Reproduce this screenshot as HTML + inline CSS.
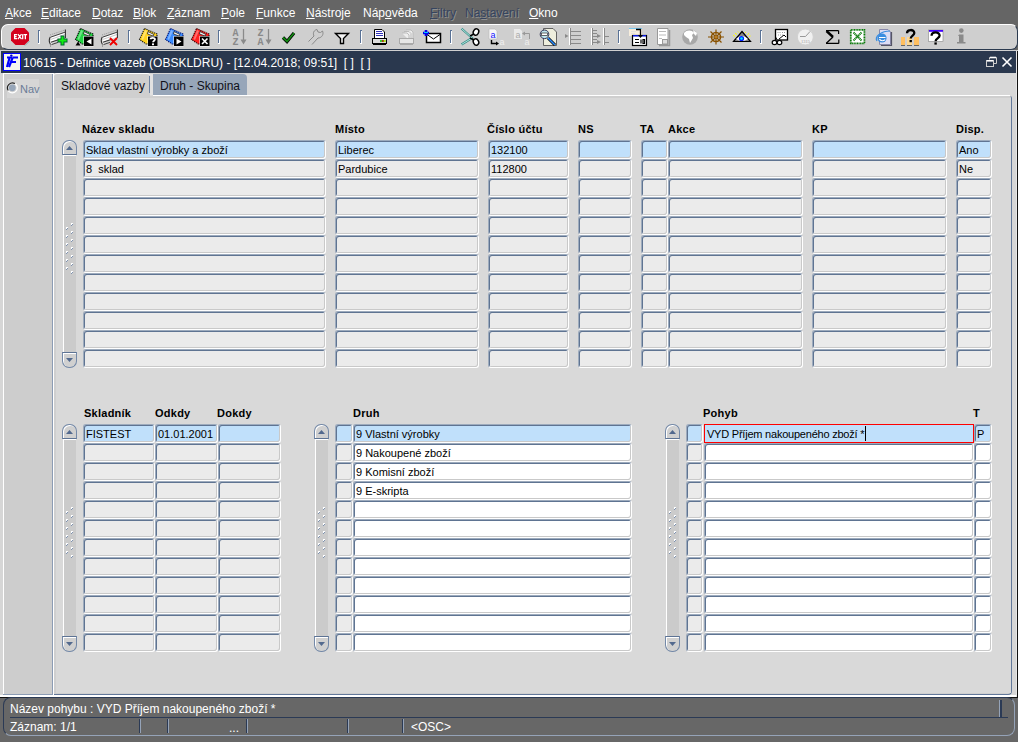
<!DOCTYPE html><html><head><meta charset="utf-8"><style>
*{box-sizing:border-box}
html,body{margin:0;padding:0}
body{width:1018px;height:742px;overflow:hidden;position:relative;background:#656565;font-family:"Liberation Sans",sans-serif;}
.a{position:absolute}
.m{position:absolute;top:6px;font-size:12px;color:#fff;white-space:pre;line-height:15px}
.md{color:#35445f;text-shadow:1px 1px 0 #8e8e8e}
.u{text-decoration:underline}
.f{position:absolute;height:19px;box-shadow:inset 1px 1px 0 #5f7492,inset -1px -1px 0 #c9c9c9;border-top:1px solid #9dabbd;border-left:1px solid #9dabbd;border-right:1px solid #fff;border-bottom:1px solid #fff;background:#ebebeb;border-radius:3px;font-size:11px;line-height:17px;padding-top:1px;padding-left:2px;white-space:pre;color:#000;overflow:hidden}
.c{background:#c0e0fb}
.w{background:#fff}
.h{position:absolute;font-size:11px;font-weight:bold;letter-spacing:0.25px;white-space:pre;line-height:13px;color:#000}
</style></head><body>
<div class="m" style="left:5px"><span class="u">A</span>kce</div>
<div class="m" style="left:41px"><span class="u">E</span>ditace</div>
<div class="m" style="left:92px"><span class="u">D</span>otaz</div>
<div class="m" style="left:133px"><span class="u">B</span>lok</div>
<div class="m" style="left:167px"><span class="u">Z</span>áznam</div>
<div class="m" style="left:221px"><span class="u">P</span>ole</div>
<div class="m" style="left:256px"><span class="u">F</span>unkce</div>
<div class="m" style="left:306px"><span class="u">N</span>ástroje</div>
<div class="m" style="left:363px">Náp<span class="u">o</span>věda</div>
<div class="m md" style="left:430px"><span class="u">F</span>iltry</div>
<div class="m md" style="left:465px">Na<span class="u">s</span>tavení</div>
<div class="m" style="left:529px"><span class="u">O</span>kno</div>
<div class="a" style="left:1px;top:24px;width:1017px;height:26px;background:#cfcfcf;border-radius:7px;border-top:1px solid #fff;border-left:1px solid #fff;border-bottom:1px solid #2b3a4f;border-right:1px solid #2b3a4f"></div>
<svg class="a" style="left:0;top:0" width="1018" height="50" shape-rendering="geometricPrecision"><polygon points="15.5,28 24.5,28 29,32.5 29,40.5 24.5,45 15.5,45 11,40.5 11,32.5" fill="#d4001c"/><path d="M25 45.5 L29.5 41" stroke="#8aa" stroke-width="1"/><path d="M14.6 34.2 V39.2 M14 34.7 H17 M14 36.7 H16.6 M14 38.7 H17 M17.9 34.2 L21.5 39.2 M21.5 34.2 L17.9 39.2 M22.7 34.2 V39.2 M23.6 34.7 H27.1 M25.35 34.2 V39.2" stroke="#fff" stroke-width="1.3" fill="none"/><path d="M38.5 30 V43" stroke="#5a7296" stroke-width="1"/><path d="M38 30.5 H40" stroke="#5a7296"/><path d="M39.5 31 V44" stroke="#fff"/><path d="M38 43.5 H40" stroke="#fff"/><path d="M128.5 30 V43" stroke="#5a7296" stroke-width="1"/><path d="M128 30.5 H130" stroke="#5a7296"/><path d="M129.5 31 V44" stroke="#fff"/><path d="M128 43.5 H130" stroke="#fff"/><path d="M218.5 30 V43" stroke="#5a7296" stroke-width="1"/><path d="M218 30.5 H220" stroke="#5a7296"/><path d="M219.5 31 V44" stroke="#fff"/><path d="M218 43.5 H220" stroke="#fff"/><path d="M360.5 30 V43" stroke="#5a7296" stroke-width="1"/><path d="M360 30.5 H362" stroke="#5a7296"/><path d="M361.5 31 V44" stroke="#fff"/><path d="M360 43.5 H362" stroke="#fff"/><path d="M450.5 30 V43" stroke="#5a7296" stroke-width="1"/><path d="M450 30.5 H452" stroke="#5a7296"/><path d="M451.5 31 V44" stroke="#fff"/><path d="M450 43.5 H452" stroke="#fff"/><path d="M618.5 30 V43" stroke="#5a7296" stroke-width="1"/><path d="M618 30.5 H620" stroke="#5a7296"/><path d="M619.5 31 V44" stroke="#fff"/><path d="M618 43.5 H620" stroke="#fff"/><path d="M760.5 30 V43" stroke="#5a7296" stroke-width="1"/><path d="M760 30.5 H762" stroke="#5a7296"/><path d="M761.5 31 V44" stroke="#fff"/><path d="M760 43.5 H762" stroke="#fff"/><g transform="translate(49,29)" fill="none"><path d="M1 6 L16 1" stroke="#999" stroke-width="1" stroke-dasharray="1 1"/><path d="M1.5 8.5 L16 3.5 V8 L1.5 13 Z" fill="#fff" stroke="none"/><path d="M1.5 13 L9 10.5 L1.5 15.5 Z" fill="#eee" stroke="none"/><path d="M1.5 8.2 L16 3.2" stroke="#444" stroke-width="1"/><path d="M1.5 10.5 L16 5.5" stroke="#bbb" stroke-width="0.8"/><path d="M2 13.2 L10 10.4" stroke="#333" stroke-width="1.1"/><path d="M2.5 15.6 L9 13.4" stroke="#444" stroke-width="1"/><path d="M16.4 0.5 V9" stroke="#333" stroke-width="1.1"/><path d="M1.2 8 C0.2 10 0.2 13.5 1.5 15.5" stroke="#333" stroke-width="1.1"/><path d="M1 17 h0.8" stroke="#555" stroke-width="1"/></g><path d="M57.5 40.5 H67.5 M62.5 35.5 V45.5" stroke="#063" stroke-width="4"/><path d="M58.5 40.5 H66.5 M62.5 36.5 V44.5" stroke="#1e1" stroke-width="2"/><g transform="translate(75,28)"><path d="M5.5 0.5 L18 6 L18 8.5 L8 16.5 L0.5 11.5 Z" fill="#22d444" stroke="#000" stroke-width="1.1" stroke-dasharray="1.2 0.9"/><path d="M2.5 11 L6 2 L8 3 L4 12 Z" fill="#fff" opacity=".35"/><path d="M9 3.5 L15 6.5 L14 8 L8.5 6 Z" fill="#f4f4f4" stroke="#222" stroke-width="0.8"/><rect x="8.5" y="8" width="10" height="10.5" fill="#fff"/><rect x="9" y="8.5" width="9.5" height="9.5" fill="#000"/><path d="M16.5 10.5 L11.5 13.5 L16.5 16.5 Z" fill="#fff"/></g><path d="M75.5 45.5 L78 41.5 L80.5 45.5 Z" fill="#000"/><g transform="translate(101,29)" fill="none"><path d="M1 6 L16 1" stroke="#999" stroke-width="1" stroke-dasharray="1 1"/><path d="M1.5 8.5 L16 3.5 V8 L1.5 13 Z" fill="#fff" stroke="none"/><path d="M1.5 13 L9 10.5 L1.5 15.5 Z" fill="#eee" stroke="none"/><path d="M1.5 8.2 L16 3.2" stroke="#444" stroke-width="1"/><path d="M1.5 10.5 L16 5.5" stroke="#bbb" stroke-width="0.8"/><path d="M2 13.2 L10 10.4" stroke="#333" stroke-width="1.1"/><path d="M2.5 15.6 L9 13.4" stroke="#444" stroke-width="1"/><path d="M16.4 0.5 V9" stroke="#333" stroke-width="1.1"/><path d="M1.2 8 C0.2 10 0.2 13.5 1.5 15.5" stroke="#333" stroke-width="1.1"/><path d="M1 17 h0.8" stroke="#555" stroke-width="1"/></g><path d="M110 38 L117 45 M117 38 L110 45" stroke="#e00" stroke-width="1.8"/><g transform="translate(139,28)"><path d="M5.5 0.5 L18 6 L18 8.5 L8 16.5 L0.5 11.5 Z" fill="#ffd21c" stroke="#111" stroke-width="1.1" stroke-dasharray="1.2 0.9"/><path d="M2.5 11 L6 2 L8 3 L4 12 Z" fill="#fff" opacity=".35"/><path d="M9 3.5 L15 6.5 L14 8 L8.5 6 Z" fill="#f4f4f4" stroke="#222" stroke-width="0.8"/><rect x="8.5" y="8" width="10" height="10.5" fill="#fff"/><rect x="9" y="8.5" width="9.5" height="9.5" fill="#000"/><path d="M11.5 11.2 C11.5 9.6 16 9.4 16 11.3 C16 12.6 14 12.8 14 14.3" stroke="#fff" stroke-width="1.8" fill="none"/><rect x="13" y="15.4" width="2" height="1.8" fill="#fff"/></g><g transform="translate(165,28)"><path d="M5.5 0.5 L18 6 L18 8.5 L8 16.5 L0.5 11.5 Z" fill="#3a8cff" stroke="#001070" stroke-width="1.1" stroke-dasharray="1.2 0.9"/><path d="M2.5 11 L6 2 L8 3 L4 12 Z" fill="#fff" opacity=".35"/><path d="M9 3.5 L15 6.5 L14 8 L8.5 6 Z" fill="#f4f4f4" stroke="#222" stroke-width="0.8"/><rect x="8.5" y="8" width="10" height="10.5" fill="#fff"/><rect x="9" y="8.5" width="9.5" height="9.5" fill="#000"/><path d="M11.5 10.5 L16.5 13.5 L11.5 16.5 Z" fill="#fff"/></g><g transform="translate(191,28)"><path d="M5.5 0.5 L18 6 L18 8.5 L8 16.5 L0.5 11.5 Z" fill="#ff2020" stroke="#300000" stroke-width="1.1" stroke-dasharray="1.2 0.9"/><path d="M2.5 11 L6 2 L8 3 L4 12 Z" fill="#fff" opacity=".35"/><path d="M9 3.5 L15 6.5 L14 8 L8.5 6 Z" fill="#f4f4f4" stroke="#222" stroke-width="0.8"/><rect x="8.5" y="8" width="10" height="10.5" fill="#fff"/><rect x="9" y="8.5" width="9.5" height="9.5" fill="#000"/><path d="M11 10.5 L16.5 16 M16.5 10.5 L11 16" stroke="#fff" stroke-width="1.6"/></g><text x="235.5" y="36" font-family="Liberation Mono" font-weight="bold" font-size="10" fill="#8a8a8a" text-anchor="middle">A</text><text x="235.5" y="44.5" font-family="Liberation Mono" font-weight="bold" font-size="10" fill="#8a8a8a" text-anchor="middle">Z</text><path d="M243.5 29 V42" stroke="#8a8a8a" stroke-width="1.3"/><path d="M240.5 39.5 L246.5 39.5 L243.5 44.5 Z" fill="#8a8a8a"/><text x="260.5" y="36" font-family="Liberation Mono" font-weight="bold" font-size="10" fill="#8a8a8a" text-anchor="middle">Z</text><text x="260.5" y="44.5" font-family="Liberation Mono" font-weight="bold" font-size="10" fill="#8a8a8a" text-anchor="middle">A</text><path d="M268.5 29 V42" stroke="#8a8a8a" stroke-width="1.3"/><path d="M265.5 39.5 L271.5 39.5 L268.5 44.5 Z" fill="#8a8a8a"/><path d="M283 37.5 L287 41.5 L294 33" stroke="#000" stroke-width="3.2" fill="none"/><path d="M283 37.5 L287 41.5 L294 33" stroke="#118811" stroke-width="1.8" fill="none"/><path d="M308.5 41.5 L314 36 C312.5 33 314 30 317 29.5 L318 32 L320.5 32.5 L322.5 31 C324 34 322 38 318 38 L312 44.5" stroke="#8a8a8a" stroke-width="1" fill="none"/><path d="M335.5 33.5 H348.5 L343.5 38.5 V43.5 H340.5 V38.5 Z" fill="#f4f4f4" stroke="#000" stroke-width="1.4" stroke-linejoin="miter"/><path d="M374.5 29.5 H382 L384.5 32 V38.5 H374.5 Z" fill="#fff" stroke="#000" stroke-width="1"/><path d="M376 31.5 H382 M376 33.5 H383 M376 35.5 H383" stroke="#1a1ab0" stroke-width="0.9"/><rect x="372.5" y="38.5" width="14" height="5" fill="#ddd" stroke="#000" stroke-width="1"/><rect x="373" y="43.5" width="13" height="1.5" fill="#000"/><path d="M380 41 H382 M382 41 H384 M384 41 H385.5" stroke="#0b0" stroke-width="1.5"/><path d="M382 41 H383.5" stroke="#e00" stroke-width="1.5"/><path d="M384 41 H385.5" stroke="#ee0" stroke-width="1.5"/><path d="M406 30 h5 l2 2 v8 M404 31.5 h5 l2 2 v6 M402 33 h5 l2 2 v5" stroke="#bbb" fill="#eee" stroke-width="1"/><rect x="399.5" y="38.5" width="14" height="5" fill="#e6e6e6" stroke="#aaa" stroke-width="1"/><rect x="400" y="43.5" width="13" height="1.5" fill="#aaa"/><rect x="426.5" y="33.5" width="14" height="9" fill="#fff" stroke="#000" stroke-width="1.5"/><path d="M427 34.5 L433.5 39 L440 34.5" stroke="#000" stroke-width="1" fill="none"/><path d="M423 33 H429 M426 30 V36" stroke="#00e" stroke-width="2.6"/><path d="M424 32.5 H428" stroke="#0cf" stroke-width="1"/><path d="M461.5 28.5 L472 38 L461.5 44.5" stroke="#3a8a8a" stroke-width="2.2" fill="none"/><path d="M461.5 28.5 L472 38 L461.5 44.5" stroke="#cfe" stroke-width="0.8" fill="none"/><ellipse cx="476" cy="32" rx="2.6" ry="3.2" fill="#fff" stroke="#000" stroke-width="1.4" transform="rotate(30 476 32)"/><ellipse cx="476" cy="42" rx="2.6" ry="3.2" fill="#fff" stroke="#000" stroke-width="1.4" transform="rotate(-30 476 42)"/><path d="M470 36 L474 34 M470 38 L474 40" stroke="#000" stroke-width="1.4"/><path d="M489 29 H495 L497 31 V39 H489 Z" fill="#f8f8f8" stroke="#bbb" stroke-width="0.6"/><text x="493" y="38" font-family="Liberation Sans" font-size="9" fill="#1515ff" text-anchor="middle">a</text><path d="M491.5 40 V43.5 H497" stroke="#000" stroke-width="1.4" fill="none"/><path d="M496 41.5 L499 43.5 L496 45.5 Z" fill="#000"/><text x="502" y="45" font-family="Liberation Sans" font-size="9" fill="#f0f0f0" text-anchor="middle">a</text><path d="M514 29 H520 L522 31 V39 H514 Z" fill="#eaeaea"/><text x="518" y="38" font-family="Liberation Sans" font-size="9" fill="#aaa" text-anchor="middle">a</text><path d="M529.5 39 V33.5 H524" stroke="#999" stroke-width="1" fill="none"/><path d="M525 31.5 L522 33.5 L525 35.5 Z" fill="#999"/><text x="527" y="45" font-family="Liberation Sans" font-size="9" fill="#eee" text-anchor="middle">a</text><path d="M543.5 28.5 H553 L556.5 32 V45.5 H543.5 Z" fill="#eeeedd" stroke="#444" stroke-width="0.8"/><path d="M548 38 L555 45" stroke="#000" stroke-width="3"/><path d="M548 38 L555 45" stroke="#2a8cff" stroke-width="1.6"/><circle cx="544.5" cy="34.3" r="4.3" fill="#bfe6ef" stroke="#335" stroke-width="1"/><rect x="541.5" y="33" width="6" height="2.5" fill="#fff" stroke="#444" stroke-width="0.8"/><path d="M569.5 28 V45" stroke="#fff" stroke-width="1"/><path d="M570.5 28 V45" stroke="#8a8a8a" stroke-width="1"/><path d="M571 31.5 H581 M571 35.5 H581 M571 39.5 H581 M571 43.5 H581" stroke="#8a8a8a" stroke-width="1"/><path d="M565 34 L568.5 36 L565 38 Z" fill="#8a8a8a"/><path d="M591.5 28 V45" stroke="#fff"/><path d="M592.5 28 V45" stroke="#8a8a8a"/><path d="M593 30.5 H597 M593 33.5 H597 M593 36.5 H597 M593 39.5 H597 M593 42.5 H597" stroke="#8a8a8a"/><path d="M597 34 L601 36 L597 38 Z M597 40 L601 42 L597 44 Z" fill="#8a8a8a"/><path d="M603.5 28 V45" stroke="#fff"/><path d="M604.5 28 V45" stroke="#8a8a8a"/><path d="M605 36.5 H609 M605 42.5 H609" stroke="#8a8a8a"/><rect x="629" y="28" width="13" height="1.2" fill="#7ac8f0"/><rect x="629" y="29" width="13" height="7" fill="#f8eedd"/><path d="M631 31.5 H636 M631 33.5 H635" stroke="#ddd" stroke-width="0.8"/><rect x="632.5" y="35.5" width="14" height="10" fill="#fff" stroke="#000" stroke-width="1.2"/><rect x="633" y="35" width="13" height="1.5" fill="#0a1adc"/><path d="M635 39.5 H639 M635 42.5 H639 M641 39.5 V43.5 M643 39.5 H644.5 V43.5 H643 Z" stroke="#000" stroke-width="1.2" fill="none"/><path d="M636 29.5 H640.5 V36" stroke="#000" stroke-width="1.3" fill="none"/><path d="M638 35 L640.5 38 L643 35 Z" fill="#000"/><path d="M657.5 28.5 H668 V44.5 H657.5 Z" fill="#fff" stroke="#999" stroke-width="1"/><path d="M669.5 30 V45.5 H659" stroke="#999" stroke-width="1.5" fill="none"/><path d="M659 31.5 H666 M659 35 H666 M659 38.5 H662" stroke="#aaa" stroke-width="0.8"/><rect x="662.5" y="39.5" width="5" height="4.5" fill="#ddd" stroke="#999" stroke-width="1"/><circle cx="690" cy="37" r="7.8" fill="#a8a8a8"/><path d="M684 33 C686 30 690 30 692 31 L694 33 L692 35 L693 38 L690 43 L689 39 L686 37 L684 35 Z M693 30 L697 33 L696 36 L694 34 Z" fill="#fff"/><g stroke="#8a5200" fill="none"><circle cx="716" cy="37" r="4.5" stroke-width="1.6"/><path d="M708 37 H724 M716 29.5 V44.5 M710.5 31.5 L721.5 42.5 M721.5 31.5 L710.5 42.5" stroke-width="1.2"/></g><circle cx="716" cy="37" r="1.2" fill="#c08020"/><path d="M742 31.5 L750.5 41.5 H733.5 Z" fill="#888" stroke="#000" stroke-width="1.2"/><path d="M736 39 Q742 33 748 39 Q742 43 736 39 Z" fill="#fff"/><circle cx="741.5" cy="38.5" r="2.6" fill="#0020ff"/><circle cx="741.5" cy="38.5" r="1.3" fill="#00e8ff"/><path d="M733 35 L735 36.5 M735 33 L737 34.5 M738 31.5 L739 32.5 M746 32 L745 33 M749 33.5 L747.5 34.5 M750.5 36 L749 37" stroke="#ff0" stroke-width="1"/><rect x="775.5" y="29.5" width="12" height="10.5" fill="#fff" stroke="#000" stroke-width="1.3"/><path d="M777.5 32.5 H781 M782 32.5 H785 M778 35 H784" stroke="#888" stroke-width="0.8" stroke-dasharray="1 1"/><path d="M779 39 L784 35 L786 37" stroke="#000" stroke-width="1" fill="none"/><ellipse cx="774.5" cy="42.5" rx="2.3" ry="2.2" fill="#fff" stroke="#000" stroke-width="1.2"/><ellipse cx="779.5" cy="42.5" rx="2.3" ry="2.2" fill="#fff" stroke="#000" stroke-width="1.2"/><path d="M775.5 37 L777 39.5" stroke="#000"/><circle cx="805.3" cy="37" r="8" fill="#f0f0f0" stroke="#d0d0d0" stroke-width="1"/><path d="M800 36.5 H805.5 L810 31.5" stroke="#999" stroke-width="1" fill="none"/><text x="805.5" y="42.5" font-family="Liberation Serif" font-size="4.5" fill="#999" text-anchor="middle">1315</text><path d="M826 30.6 H838.5 M838.6 30.5 V34 M826 43.4 H838.8 M838.8 43.6 V39.5" stroke="#000" stroke-width="1.2" fill="none"/><path d="M826.5 31 L833 37" stroke="#000" stroke-width="2.4"/><path d="M833 37 L826.3 43.2" stroke="#000" stroke-width="1.3"/><rect x="850.8" y="29.8" width="13.6" height="13.6" fill="#fff" stroke="#0b7a0b" stroke-width="1.8" stroke-dasharray="1.1 0.5"/><path d="M853.5 32.5 L861.5 40.5 M861.5 32.5 L853.5 40.5" stroke="#0b7a0b" stroke-width="2" stroke-dasharray="1.2 0.5"/><path d="M879.5 29.5 H888 L890.5 32 V44.5 H879.5 Z" fill="#dcdcf4" stroke="#8888aa" stroke-width="1"/><path d="M881 45.5 H891.5 V32" stroke="#556" stroke-width="1.2" fill="none"/><circle cx="882" cy="38" r="4.6" fill="#3a8ce0"/><path d="M879 37.5 H885.5 M885 39.5 C884 41 880.5 41.5 879.5 39" stroke="#fff" stroke-width="1.2" fill="none"/><path d="M877 41 C874 36 882 31 890 31" stroke="#3a8ce0" stroke-width="1.2" fill="none"/><rect x="901" y="37" width="4" height="8" fill="#ffbf60"/><rect x="907" y="37" width="5" height="8" fill="#ffd890"/><rect x="914" y="37" width="5" height="8" fill="#ffbf60"/><path d="M901 45.5 H905 M907 45.5 H912 M914 45.5 H919" stroke="#666" stroke-width="1"/><path d="M907 33.2 C907 29 914.3 29 914.3 33 C914.3 35.6 910.7 35.6 910.7 38.6" stroke="#000" stroke-width="2.3" fill="none"/><rect x="909.5" y="40" width="2.4" height="2.2" fill="#000"/><rect x="928.5" y="30" width="14.5" height="11.5" fill="#fff" stroke="#888" stroke-width="0.6"/><rect x="929" y="30" width="14" height="1.8" fill="#4000ff"/><path d="M931.6 35.8 C931.6 31.4 939.6 31.4 939.6 35.6 C939.6 38.4 935.6 38.4 935.6 41.2" stroke="#000" stroke-width="2.3" fill="none"/><rect x="934.4" y="42.4" width="2.4" height="2.2" fill="#000"/><circle cx="961.3" cy="30.6" r="2.3" fill="#8a8a8a"/><path d="M959 34.5 H963.5 V42 H965.5 V43.5 H957 V42 H959 V36 H958 Z" fill="#8a8a8a"/></svg>
<div class="a" style="left:0;top:50px;width:1018px;height:1px;background:#d0d0d0"></div>
<div class="a" style="left:0;top:51px;width:1018px;height:22px;background:#d0d0d0"></div>
<div class="a" style="left:1px;top:51px;width:1015px;height:22px;background:#2a384e"></div>
<div class="a" style="left:23px;top:56px;font-size:12px;color:#fff;white-space:pre;line-height:15px">10615 - Definice vazeb (OBSKLDRU) - [12.04.2018; 09:51]  [ ]  [ ]</div>
<div class="a" style="left:3px;top:53px;width:18px;height:18px;border:1px solid #0000ff;background:#f6f6ee"></div>
<svg class="a" style="left:0;top:50px" width="24" height="24"><path d="M7 7.5 H12.5 M9.5 8 L7 17" stroke="#0000ff" stroke-width="2.2"/><circle cx="11.3" cy="5.6" r="1.2" fill="#0000cc"/><path d="M12.5 7.5 H18 M11.5 12 H16 M12.5 8 L9 17" stroke="#0000ff" stroke-width="2.2"/></svg>
<svg class="a" style="left:980px;top:51px" width="36" height="22"><path d="M9.5 8.5 V6.5 H16.5 V12.5 H13.5" stroke="#cfcfcf" stroke-width="1" fill="none"/><path d="M10 6.5 H16" stroke="#fff" stroke-width="1.6"/><rect x="6.5" y="9.5" width="7" height="6" stroke="#cfcfcf" stroke-width="1" fill="none"/><path d="M7 9.8 H13" stroke="#fff" stroke-width="1.6"/><path d="M22.5 6.5 L31.5 15.5 M31.5 6.5 L22.5 15.5" stroke="#fff" stroke-width="1.6"/></svg>
<div class="a" style="left:0;top:73px;width:1018px;height:625px;background:#d6d6d6"></div>
<div class="a" style="left:3px;top:73px;width:51px;height:624px;background:#cdcdcd;border-left:1px solid #fff;border-top:1px solid #fff;border-right:2px solid #fff"></div>
<div class="a" style="left:52px;top:74px;width:1px;height:621px;background:#8c9cb4"></div>
<div class="a" style="left:3px;top:694px;width:50px;height:1px;background:#8c9cb4"></div>
<div class="a" style="left:7px;top:79px;width:32px;height:19px;background:#d6d6d6"></div>
<svg class="a" style="left:6px;top:81px" width="14" height="14"><circle cx="6.3" cy="6.8" r="5" fill="none" stroke="#fff" stroke-width="1.2"/><path d="M2.2 9.5 A5 5 0 0 1 9 2.6" stroke="#222" stroke-width="1.2" fill="none"/><circle cx="6.3" cy="6.8" r="3.4" fill="#97a6b9"/></svg>
<div class="a" style="left:20px;top:83px;font-size:11px;color:#6a7c98;white-space:pre;line-height:13px">Nav</div>
<div class="a" style="left:54px;top:74px;width:962px;height:22px;background:#d8d8d8"></div>
<div class="a" style="left:54px;top:73px;width:96px;height:25px;background:#cfcfcf;border-top:1px solid #fff;border-radius:3px 3px 0 0"></div>
<div class="a" style="left:149px;top:76px;width:1px;height:17px;background:#6f84a4"></div><div class="a" style="left:150px;top:74px;width:3px;height:21px;background:#e2e2e2"></div>
<div class="a" style="left:61px;top:79px;font-size:12px;color:#101018;white-space:pre;line-height:15px">Skladové vazby</div>
<div class="a" style="left:153px;top:74px;width:94px;height:22px;background:#97a6b9;border-radius:0 4px 0 0;border-bottom:1px solid #fff"></div>
<div class="a" style="left:160px;top:79px;font-size:12px;color:#101018;white-space:pre;line-height:15px">Druh - Skupina</div>
<div class="a" style="left:54px;top:96px;width:958px;height:599px;background:#cfcfcf;border-right:1px solid #62789a;border-bottom:1px solid #62789a;border-radius:0 2px 4px 0"></div>
<div class="a" style="left:247px;top:95px;width:763px;height:1px;background:#fff"></div>
<div class="a" style="left:56px;top:98px;width:955px;height:595px;background:#d9d9d9"></div>
<div class="a" style="left:1016px;top:51px;width:1px;height:646px;background:#e6e6e6"></div><div class="a" style="left:1017px;top:51px;width:1px;height:647px;background:#111"></div>
<div class="a" style="left:0;top:695px;width:1016px;height:2px;background:#fff"></div>
<div class="a" style="left:0;top:697px;width:1018px;height:1px;background:#111"></div>
<div class="f c" style="left:83px;top:140px;width:243px">Sklad vlastní výrobky a zboží</div>
<div class="f c" style="left:335px;top:140px;width:144px">Liberec</div>
<div class="f c" style="left:488px;top:140px;width:81px">132100</div>
<div class="f c" style="left:578px;top:140px;width:54px"></div>
<div class="f c" style="left:641px;top:140px;width:27px"></div>
<div class="f c" style="left:668px;top:140px;width:135px"></div>
<div class="f c" style="left:812px;top:140px;width:135px"></div>
<div class="f c" style="left:956px;top:140px;width:36px">Ano</div>
<div class="f " style="left:83px;top:159px;width:243px">8  sklad</div>
<div class="f " style="left:335px;top:159px;width:144px">Pardubice</div>
<div class="f " style="left:488px;top:159px;width:81px">112800</div>
<div class="f " style="left:578px;top:159px;width:54px"></div>
<div class="f " style="left:641px;top:159px;width:27px"></div>
<div class="f " style="left:668px;top:159px;width:135px"></div>
<div class="f " style="left:812px;top:159px;width:135px"></div>
<div class="f " style="left:956px;top:159px;width:36px">Ne</div>
<div class="f " style="left:83px;top:178px;width:243px"></div>
<div class="f " style="left:335px;top:178px;width:144px"></div>
<div class="f " style="left:488px;top:178px;width:81px"></div>
<div class="f " style="left:578px;top:178px;width:54px"></div>
<div class="f " style="left:641px;top:178px;width:27px"></div>
<div class="f " style="left:668px;top:178px;width:135px"></div>
<div class="f " style="left:812px;top:178px;width:135px"></div>
<div class="f " style="left:956px;top:178px;width:36px"></div>
<div class="f " style="left:83px;top:197px;width:243px"></div>
<div class="f " style="left:335px;top:197px;width:144px"></div>
<div class="f " style="left:488px;top:197px;width:81px"></div>
<div class="f " style="left:578px;top:197px;width:54px"></div>
<div class="f " style="left:641px;top:197px;width:27px"></div>
<div class="f " style="left:668px;top:197px;width:135px"></div>
<div class="f " style="left:812px;top:197px;width:135px"></div>
<div class="f " style="left:956px;top:197px;width:36px"></div>
<div class="f " style="left:83px;top:216px;width:243px"></div>
<div class="f " style="left:335px;top:216px;width:144px"></div>
<div class="f " style="left:488px;top:216px;width:81px"></div>
<div class="f " style="left:578px;top:216px;width:54px"></div>
<div class="f " style="left:641px;top:216px;width:27px"></div>
<div class="f " style="left:668px;top:216px;width:135px"></div>
<div class="f " style="left:812px;top:216px;width:135px"></div>
<div class="f " style="left:956px;top:216px;width:36px"></div>
<div class="f " style="left:83px;top:235px;width:243px"></div>
<div class="f " style="left:335px;top:235px;width:144px"></div>
<div class="f " style="left:488px;top:235px;width:81px"></div>
<div class="f " style="left:578px;top:235px;width:54px"></div>
<div class="f " style="left:641px;top:235px;width:27px"></div>
<div class="f " style="left:668px;top:235px;width:135px"></div>
<div class="f " style="left:812px;top:235px;width:135px"></div>
<div class="f " style="left:956px;top:235px;width:36px"></div>
<div class="f " style="left:83px;top:254px;width:243px"></div>
<div class="f " style="left:335px;top:254px;width:144px"></div>
<div class="f " style="left:488px;top:254px;width:81px"></div>
<div class="f " style="left:578px;top:254px;width:54px"></div>
<div class="f " style="left:641px;top:254px;width:27px"></div>
<div class="f " style="left:668px;top:254px;width:135px"></div>
<div class="f " style="left:812px;top:254px;width:135px"></div>
<div class="f " style="left:956px;top:254px;width:36px"></div>
<div class="f " style="left:83px;top:273px;width:243px"></div>
<div class="f " style="left:335px;top:273px;width:144px"></div>
<div class="f " style="left:488px;top:273px;width:81px"></div>
<div class="f " style="left:578px;top:273px;width:54px"></div>
<div class="f " style="left:641px;top:273px;width:27px"></div>
<div class="f " style="left:668px;top:273px;width:135px"></div>
<div class="f " style="left:812px;top:273px;width:135px"></div>
<div class="f " style="left:956px;top:273px;width:36px"></div>
<div class="f " style="left:83px;top:292px;width:243px"></div>
<div class="f " style="left:335px;top:292px;width:144px"></div>
<div class="f " style="left:488px;top:292px;width:81px"></div>
<div class="f " style="left:578px;top:292px;width:54px"></div>
<div class="f " style="left:641px;top:292px;width:27px"></div>
<div class="f " style="left:668px;top:292px;width:135px"></div>
<div class="f " style="left:812px;top:292px;width:135px"></div>
<div class="f " style="left:956px;top:292px;width:36px"></div>
<div class="f " style="left:83px;top:311px;width:243px"></div>
<div class="f " style="left:335px;top:311px;width:144px"></div>
<div class="f " style="left:488px;top:311px;width:81px"></div>
<div class="f " style="left:578px;top:311px;width:54px"></div>
<div class="f " style="left:641px;top:311px;width:27px"></div>
<div class="f " style="left:668px;top:311px;width:135px"></div>
<div class="f " style="left:812px;top:311px;width:135px"></div>
<div class="f " style="left:956px;top:311px;width:36px"></div>
<div class="f " style="left:83px;top:330px;width:243px"></div>
<div class="f " style="left:335px;top:330px;width:144px"></div>
<div class="f " style="left:488px;top:330px;width:81px"></div>
<div class="f " style="left:578px;top:330px;width:54px"></div>
<div class="f " style="left:641px;top:330px;width:27px"></div>
<div class="f " style="left:668px;top:330px;width:135px"></div>
<div class="f " style="left:812px;top:330px;width:135px"></div>
<div class="f " style="left:956px;top:330px;width:36px"></div>
<div class="f " style="left:83px;top:349px;width:243px"></div>
<div class="f " style="left:335px;top:349px;width:144px"></div>
<div class="f " style="left:488px;top:349px;width:81px"></div>
<div class="f " style="left:578px;top:349px;width:54px"></div>
<div class="f " style="left:641px;top:349px;width:27px"></div>
<div class="f " style="left:668px;top:349px;width:135px"></div>
<div class="f " style="left:812px;top:349px;width:135px"></div>
<div class="f " style="left:956px;top:349px;width:36px"></div>
<div class="h" style="left:82px;top:123px">Název skladu</div>
<div class="h" style="left:335px;top:123px">Místo</div>
<div class="h" style="left:487px;top:123px">Číslo účtu</div>
<div class="h" style="left:578px;top:123px">NS</div>
<div class="h" style="left:640px;top:123px">TA</div>
<div class="h" style="left:668px;top:123px">Akce</div>
<div class="h" style="left:812px;top:123px">KP</div>
<div class="h" style="left:956px;top:123px">Disp.</div>
<div class="a" style="left:62px;top:140px;width:15px;height:228px"><div class="a" style="left:1px;top:15px;width:13px;height:197px;background:#cbcbcb;border-left:1px solid #fff;border-top:1px solid #fff"></div><div class="a" style="left:0;top:0;width:15px;height:15px;background:#d0d0d0;border:1px solid #7489a8;border-bottom:1px solid #5d7394;border-radius:7px 7px 0 0;box-shadow:inset 1px 1px 0 #fff"></div><div class="a" style="left:0;top:212px;width:15px;height:16px;background:#d0d0d0;border:1px solid #7489a8;border-top:1px solid #5d7394;border-radius:0 0 7px 7px;box-shadow:inset 1px 1px 0 #fff"></div><svg class="a" style="left:0;top:0" width="15" height="228"><path d="M4 10 L7.5 6 L11 10 Z" fill="#52698e"/><path d="M4 218 L11 218 L7.5 222 Z" fill="#52698e"/><path d="M9 83h2v1h-1v1h-1z" fill="#fff"/><path d="M11 84v1h-1v1h-1v-1h1v-1z" fill="#7f93b0"/><path d="M9 91h2v1h-1v1h-1z" fill="#fff"/><path d="M11 92v1h-1v1h-1v-1h1v-1z" fill="#7f93b0"/><path d="M9 99h2v1h-1v1h-1z" fill="#fff"/><path d="M11 100v1h-1v1h-1v-1h1v-1z" fill="#7f93b0"/><path d="M9 107h2v1h-1v1h-1z" fill="#fff"/><path d="M11 108v1h-1v1h-1v-1h1v-1z" fill="#7f93b0"/><path d="M9 115h2v1h-1v1h-1z" fill="#fff"/><path d="M11 116v1h-1v1h-1v-1h1v-1z" fill="#7f93b0"/><path d="M9 123h2v1h-1v1h-1z" fill="#fff"/><path d="M11 124v1h-1v1h-1v-1h1v-1z" fill="#7f93b0"/><path d="M9 131h2v1h-1v1h-1z" fill="#fff"/><path d="M11 132v1h-1v1h-1v-1h1v-1z" fill="#7f93b0"/><path d="M4 87h2v1h-1v1h-1z" fill="#fff"/><path d="M6 88v1h-1v1h-1v-1h1v-1z" fill="#7f93b0"/><path d="M4 95h2v1h-1v1h-1z" fill="#fff"/><path d="M6 96v1h-1v1h-1v-1h1v-1z" fill="#7f93b0"/><path d="M4 103h2v1h-1v1h-1z" fill="#fff"/><path d="M6 104v1h-1v1h-1v-1h1v-1z" fill="#7f93b0"/><path d="M4 111h2v1h-1v1h-1z" fill="#fff"/><path d="M6 112v1h-1v1h-1v-1h1v-1z" fill="#7f93b0"/><path d="M4 119h2v1h-1v1h-1z" fill="#fff"/><path d="M6 120v1h-1v1h-1v-1h1v-1z" fill="#7f93b0"/><path d="M4 127h2v1h-1v1h-1z" fill="#fff"/><path d="M6 128v1h-1v1h-1v-1h1v-1z" fill="#7f93b0"/></svg></div>
<div class="f c" style="left:83px;top:424px;width:72px">FISTEST</div>
<div class="f c" style="left:155px;top:424px;width:63px">01.01.2001</div>
<div class="f c" style="left:218px;top:424px;width:63px"></div>
<div class="f c" style="left:335px;top:424px;width:18px"></div>
<div class="f c" style="left:353px;top:424px;width:279px">9 Vlastní výrobky</div>
<div class="f c" style="left:686px;top:424px;width:17px"></div>
<div class="f c" style="left:704px;top:424px;width:270px;height:19px;border:1px solid #ff0000;border-radius:0;padding-left:2px;padding-top:0;line-height:18px;box-shadow:none"><span style="letter-spacing:-0.22px">VYD Příjem nakoupeného zboží *</span></div>
<div class="a" style="left:865px;top:426px;width:1px;height:15px;background:#000"></div>
<div class="f c" style="left:974px;top:424px;width:18px">P</div>
<div class="f " style="left:83px;top:443px;width:72px"></div>
<div class="f " style="left:155px;top:443px;width:63px"></div>
<div class="f " style="left:218px;top:443px;width:63px"></div>
<div class="f " style="left:335px;top:443px;width:18px"></div>
<div class="f w" style="left:353px;top:443px;width:279px">9 Nakoupené zboží</div>
<div class="f " style="left:686px;top:443px;width:17px"></div>
<div class="f w" style="left:704px;top:443px;width:270px"></div>
<div class="f w" style="left:974px;top:443px;width:18px"></div>
<div class="f " style="left:83px;top:462px;width:72px"></div>
<div class="f " style="left:155px;top:462px;width:63px"></div>
<div class="f " style="left:218px;top:462px;width:63px"></div>
<div class="f " style="left:335px;top:462px;width:18px"></div>
<div class="f w" style="left:353px;top:462px;width:279px">9 Komisní zboží</div>
<div class="f " style="left:686px;top:462px;width:17px"></div>
<div class="f w" style="left:704px;top:462px;width:270px"></div>
<div class="f w" style="left:974px;top:462px;width:18px"></div>
<div class="f " style="left:83px;top:481px;width:72px"></div>
<div class="f " style="left:155px;top:481px;width:63px"></div>
<div class="f " style="left:218px;top:481px;width:63px"></div>
<div class="f " style="left:335px;top:481px;width:18px"></div>
<div class="f w" style="left:353px;top:481px;width:279px">9 E-skripta</div>
<div class="f " style="left:686px;top:481px;width:17px"></div>
<div class="f w" style="left:704px;top:481px;width:270px"></div>
<div class="f w" style="left:974px;top:481px;width:18px"></div>
<div class="f " style="left:83px;top:500px;width:72px"></div>
<div class="f " style="left:155px;top:500px;width:63px"></div>
<div class="f " style="left:218px;top:500px;width:63px"></div>
<div class="f " style="left:335px;top:500px;width:18px"></div>
<div class="f w" style="left:353px;top:500px;width:279px"></div>
<div class="f " style="left:686px;top:500px;width:17px"></div>
<div class="f w" style="left:704px;top:500px;width:270px"></div>
<div class="f w" style="left:974px;top:500px;width:18px"></div>
<div class="f " style="left:83px;top:519px;width:72px"></div>
<div class="f " style="left:155px;top:519px;width:63px"></div>
<div class="f " style="left:218px;top:519px;width:63px"></div>
<div class="f " style="left:335px;top:519px;width:18px"></div>
<div class="f w" style="left:353px;top:519px;width:279px"></div>
<div class="f " style="left:686px;top:519px;width:17px"></div>
<div class="f w" style="left:704px;top:519px;width:270px"></div>
<div class="f w" style="left:974px;top:519px;width:18px"></div>
<div class="f " style="left:83px;top:538px;width:72px"></div>
<div class="f " style="left:155px;top:538px;width:63px"></div>
<div class="f " style="left:218px;top:538px;width:63px"></div>
<div class="f " style="left:335px;top:538px;width:18px"></div>
<div class="f w" style="left:353px;top:538px;width:279px"></div>
<div class="f " style="left:686px;top:538px;width:17px"></div>
<div class="f w" style="left:704px;top:538px;width:270px"></div>
<div class="f w" style="left:974px;top:538px;width:18px"></div>
<div class="f " style="left:83px;top:557px;width:72px"></div>
<div class="f " style="left:155px;top:557px;width:63px"></div>
<div class="f " style="left:218px;top:557px;width:63px"></div>
<div class="f " style="left:335px;top:557px;width:18px"></div>
<div class="f w" style="left:353px;top:557px;width:279px"></div>
<div class="f " style="left:686px;top:557px;width:17px"></div>
<div class="f w" style="left:704px;top:557px;width:270px"></div>
<div class="f w" style="left:974px;top:557px;width:18px"></div>
<div class="f " style="left:83px;top:576px;width:72px"></div>
<div class="f " style="left:155px;top:576px;width:63px"></div>
<div class="f " style="left:218px;top:576px;width:63px"></div>
<div class="f " style="left:335px;top:576px;width:18px"></div>
<div class="f w" style="left:353px;top:576px;width:279px"></div>
<div class="f " style="left:686px;top:576px;width:17px"></div>
<div class="f w" style="left:704px;top:576px;width:270px"></div>
<div class="f w" style="left:974px;top:576px;width:18px"></div>
<div class="f " style="left:83px;top:595px;width:72px"></div>
<div class="f " style="left:155px;top:595px;width:63px"></div>
<div class="f " style="left:218px;top:595px;width:63px"></div>
<div class="f " style="left:335px;top:595px;width:18px"></div>
<div class="f w" style="left:353px;top:595px;width:279px"></div>
<div class="f " style="left:686px;top:595px;width:17px"></div>
<div class="f w" style="left:704px;top:595px;width:270px"></div>
<div class="f w" style="left:974px;top:595px;width:18px"></div>
<div class="f " style="left:83px;top:614px;width:72px"></div>
<div class="f " style="left:155px;top:614px;width:63px"></div>
<div class="f " style="left:218px;top:614px;width:63px"></div>
<div class="f " style="left:335px;top:614px;width:18px"></div>
<div class="f w" style="left:353px;top:614px;width:279px"></div>
<div class="f " style="left:686px;top:614px;width:17px"></div>
<div class="f w" style="left:704px;top:614px;width:270px"></div>
<div class="f w" style="left:974px;top:614px;width:18px"></div>
<div class="f " style="left:83px;top:633px;width:72px"></div>
<div class="f " style="left:155px;top:633px;width:63px"></div>
<div class="f " style="left:218px;top:633px;width:63px"></div>
<div class="f " style="left:335px;top:633px;width:18px"></div>
<div class="f w" style="left:353px;top:633px;width:279px"></div>
<div class="f " style="left:686px;top:633px;width:17px"></div>
<div class="f w" style="left:704px;top:633px;width:270px"></div>
<div class="f w" style="left:974px;top:633px;width:18px"></div>
<div class="h" style="left:84px;top:407px">Skladník</div>
<div class="h" style="left:155px;top:407px">Odkdy</div>
<div class="h" style="left:217px;top:407px">Dokdy</div>
<div class="h" style="left:353px;top:407px">Druh</div>
<div class="h" style="left:703px;top:407px">Pohyb</div>
<div class="h" style="left:973px;top:407px">T</div>
<div class="a" style="left:62px;top:424px;width:15px;height:228px"><div class="a" style="left:1px;top:15px;width:13px;height:197px;background:#cbcbcb;border-left:1px solid #fff;border-top:1px solid #fff"></div><div class="a" style="left:0;top:0;width:15px;height:15px;background:#d0d0d0;border:1px solid #7489a8;border-bottom:1px solid #5d7394;border-radius:7px 7px 0 0;box-shadow:inset 1px 1px 0 #fff"></div><div class="a" style="left:0;top:212px;width:15px;height:16px;background:#d0d0d0;border:1px solid #7489a8;border-top:1px solid #5d7394;border-radius:0 0 7px 7px;box-shadow:inset 1px 1px 0 #fff"></div><svg class="a" style="left:0;top:0" width="15" height="228"><path d="M4 10 L7.5 6 L11 10 Z" fill="#52698e"/><path d="M4 218 L11 218 L7.5 222 Z" fill="#52698e"/><path d="M9 83h2v1h-1v1h-1z" fill="#fff"/><path d="M11 84v1h-1v1h-1v-1h1v-1z" fill="#7f93b0"/><path d="M9 91h2v1h-1v1h-1z" fill="#fff"/><path d="M11 92v1h-1v1h-1v-1h1v-1z" fill="#7f93b0"/><path d="M9 99h2v1h-1v1h-1z" fill="#fff"/><path d="M11 100v1h-1v1h-1v-1h1v-1z" fill="#7f93b0"/><path d="M9 107h2v1h-1v1h-1z" fill="#fff"/><path d="M11 108v1h-1v1h-1v-1h1v-1z" fill="#7f93b0"/><path d="M9 115h2v1h-1v1h-1z" fill="#fff"/><path d="M11 116v1h-1v1h-1v-1h1v-1z" fill="#7f93b0"/><path d="M9 123h2v1h-1v1h-1z" fill="#fff"/><path d="M11 124v1h-1v1h-1v-1h1v-1z" fill="#7f93b0"/><path d="M9 131h2v1h-1v1h-1z" fill="#fff"/><path d="M11 132v1h-1v1h-1v-1h1v-1z" fill="#7f93b0"/><path d="M4 87h2v1h-1v1h-1z" fill="#fff"/><path d="M6 88v1h-1v1h-1v-1h1v-1z" fill="#7f93b0"/><path d="M4 95h2v1h-1v1h-1z" fill="#fff"/><path d="M6 96v1h-1v1h-1v-1h1v-1z" fill="#7f93b0"/><path d="M4 103h2v1h-1v1h-1z" fill="#fff"/><path d="M6 104v1h-1v1h-1v-1h1v-1z" fill="#7f93b0"/><path d="M4 111h2v1h-1v1h-1z" fill="#fff"/><path d="M6 112v1h-1v1h-1v-1h1v-1z" fill="#7f93b0"/><path d="M4 119h2v1h-1v1h-1z" fill="#fff"/><path d="M6 120v1h-1v1h-1v-1h1v-1z" fill="#7f93b0"/><path d="M4 127h2v1h-1v1h-1z" fill="#fff"/><path d="M6 128v1h-1v1h-1v-1h1v-1z" fill="#7f93b0"/></svg></div>
<div class="a" style="left:314px;top:424px;width:15px;height:228px"><div class="a" style="left:1px;top:15px;width:13px;height:197px;background:#cbcbcb;border-left:1px solid #fff;border-top:1px solid #fff"></div><div class="a" style="left:0;top:0;width:15px;height:15px;background:#d0d0d0;border:1px solid #7489a8;border-bottom:1px solid #5d7394;border-radius:7px 7px 0 0;box-shadow:inset 1px 1px 0 #fff"></div><div class="a" style="left:0;top:212px;width:15px;height:16px;background:#d0d0d0;border:1px solid #7489a8;border-top:1px solid #5d7394;border-radius:0 0 7px 7px;box-shadow:inset 1px 1px 0 #fff"></div><svg class="a" style="left:0;top:0" width="15" height="228"><path d="M4 10 L7.5 6 L11 10 Z" fill="#52698e"/><path d="M4 218 L11 218 L7.5 222 Z" fill="#52698e"/><path d="M9 83h2v1h-1v1h-1z" fill="#fff"/><path d="M11 84v1h-1v1h-1v-1h1v-1z" fill="#7f93b0"/><path d="M9 91h2v1h-1v1h-1z" fill="#fff"/><path d="M11 92v1h-1v1h-1v-1h1v-1z" fill="#7f93b0"/><path d="M9 99h2v1h-1v1h-1z" fill="#fff"/><path d="M11 100v1h-1v1h-1v-1h1v-1z" fill="#7f93b0"/><path d="M9 107h2v1h-1v1h-1z" fill="#fff"/><path d="M11 108v1h-1v1h-1v-1h1v-1z" fill="#7f93b0"/><path d="M9 115h2v1h-1v1h-1z" fill="#fff"/><path d="M11 116v1h-1v1h-1v-1h1v-1z" fill="#7f93b0"/><path d="M9 123h2v1h-1v1h-1z" fill="#fff"/><path d="M11 124v1h-1v1h-1v-1h1v-1z" fill="#7f93b0"/><path d="M9 131h2v1h-1v1h-1z" fill="#fff"/><path d="M11 132v1h-1v1h-1v-1h1v-1z" fill="#7f93b0"/><path d="M4 87h2v1h-1v1h-1z" fill="#fff"/><path d="M6 88v1h-1v1h-1v-1h1v-1z" fill="#7f93b0"/><path d="M4 95h2v1h-1v1h-1z" fill="#fff"/><path d="M6 96v1h-1v1h-1v-1h1v-1z" fill="#7f93b0"/><path d="M4 103h2v1h-1v1h-1z" fill="#fff"/><path d="M6 104v1h-1v1h-1v-1h1v-1z" fill="#7f93b0"/><path d="M4 111h2v1h-1v1h-1z" fill="#fff"/><path d="M6 112v1h-1v1h-1v-1h1v-1z" fill="#7f93b0"/><path d="M4 119h2v1h-1v1h-1z" fill="#fff"/><path d="M6 120v1h-1v1h-1v-1h1v-1z" fill="#7f93b0"/><path d="M4 127h2v1h-1v1h-1z" fill="#fff"/><path d="M6 128v1h-1v1h-1v-1h1v-1z" fill="#7f93b0"/></svg></div>
<div class="a" style="left:665px;top:424px;width:15px;height:228px"><div class="a" style="left:1px;top:15px;width:13px;height:197px;background:#cbcbcb;border-left:1px solid #fff;border-top:1px solid #fff"></div><div class="a" style="left:0;top:0;width:15px;height:15px;background:#d0d0d0;border:1px solid #7489a8;border-bottom:1px solid #5d7394;border-radius:7px 7px 0 0;box-shadow:inset 1px 1px 0 #fff"></div><div class="a" style="left:0;top:212px;width:15px;height:16px;background:#d0d0d0;border:1px solid #7489a8;border-top:1px solid #5d7394;border-radius:0 0 7px 7px;box-shadow:inset 1px 1px 0 #fff"></div><svg class="a" style="left:0;top:0" width="15" height="228"><path d="M4 10 L7.5 6 L11 10 Z" fill="#52698e"/><path d="M4 218 L11 218 L7.5 222 Z" fill="#52698e"/><path d="M9 83h2v1h-1v1h-1z" fill="#fff"/><path d="M11 84v1h-1v1h-1v-1h1v-1z" fill="#7f93b0"/><path d="M9 91h2v1h-1v1h-1z" fill="#fff"/><path d="M11 92v1h-1v1h-1v-1h1v-1z" fill="#7f93b0"/><path d="M9 99h2v1h-1v1h-1z" fill="#fff"/><path d="M11 100v1h-1v1h-1v-1h1v-1z" fill="#7f93b0"/><path d="M9 107h2v1h-1v1h-1z" fill="#fff"/><path d="M11 108v1h-1v1h-1v-1h1v-1z" fill="#7f93b0"/><path d="M9 115h2v1h-1v1h-1z" fill="#fff"/><path d="M11 116v1h-1v1h-1v-1h1v-1z" fill="#7f93b0"/><path d="M9 123h2v1h-1v1h-1z" fill="#fff"/><path d="M11 124v1h-1v1h-1v-1h1v-1z" fill="#7f93b0"/><path d="M9 131h2v1h-1v1h-1z" fill="#fff"/><path d="M11 132v1h-1v1h-1v-1h1v-1z" fill="#7f93b0"/><path d="M4 87h2v1h-1v1h-1z" fill="#fff"/><path d="M6 88v1h-1v1h-1v-1h1v-1z" fill="#7f93b0"/><path d="M4 95h2v1h-1v1h-1z" fill="#fff"/><path d="M6 96v1h-1v1h-1v-1h1v-1z" fill="#7f93b0"/><path d="M4 103h2v1h-1v1h-1z" fill="#fff"/><path d="M6 104v1h-1v1h-1v-1h1v-1z" fill="#7f93b0"/><path d="M4 111h2v1h-1v1h-1z" fill="#fff"/><path d="M6 112v1h-1v1h-1v-1h1v-1z" fill="#7f93b0"/><path d="M4 119h2v1h-1v1h-1z" fill="#fff"/><path d="M6 120v1h-1v1h-1v-1h1v-1z" fill="#7f93b0"/><path d="M4 127h2v1h-1v1h-1z" fill="#fff"/><path d="M6 128v1h-1v1h-1v-1h1v-1z" fill="#7f93b0"/></svg></div>
<div class="a" style="left:0;top:698px;width:1018px;height:44px;background:#676767"></div>
<div class="a" style="left:3px;top:697px;width:1012px;height:39px;border:1px solid #2b3a55;border-bottom-color:#95a3b8;border-right-color:#95a3b8;border-radius:8px"></div>
<div class="a" style="left:10px;top:717px;width:998px;height:1px;background:#2b3a55"></div>
<div class="a" style="left:999px;top:700px;width:1px;height:17px;background:#95a3b8"></div><div class="a" style="left:1000px;top:700px;width:2px;height:17px;background:#2b3a55"></div>
<div class="a" style="left:139px;top:719px;width:1px;height:14px;background:#2b3a55"></div><div class="a" style="left:140px;top:719px;width:1px;height:14px;background:#95a3b8"></div>
<div class="a" style="left:167px;top:719px;width:1px;height:14px;background:#2b3a55"></div><div class="a" style="left:168px;top:719px;width:1px;height:14px;background:#95a3b8"></div>
<div class="a" style="left:246px;top:719px;width:1px;height:14px;background:#2b3a55"></div><div class="a" style="left:247px;top:719px;width:1px;height:14px;background:#95a3b8"></div>
<div class="a" style="left:347px;top:719px;width:1px;height:14px;background:#2b3a55"></div><div class="a" style="left:348px;top:719px;width:1px;height:14px;background:#95a3b8"></div>
<div class="a" style="left:402px;top:719px;width:1px;height:14px;background:#2b3a55"></div><div class="a" style="left:403px;top:719px;width:1px;height:14px;background:#95a3b8"></div>
<div class="a" style="left:10px;top:702px;font-size:12px;color:#fff;white-space:pre;line-height:15px">Název pohybu : VYD Příjem nakoupeného zboží *</div>
<div class="a" style="left:10px;top:720px;font-size:12px;color:#fff;white-space:pre;line-height:15px">Záznam: 1/1</div>
<div class="a" style="left:229px;top:721px;font-size:12px;color:#fff;white-space:pre;line-height:15px">...</div>
<div class="a" style="left:411px;top:721px;font-size:12px;color:#fff;white-space:pre;line-height:13px">&lt;OSC&gt;</div>
</body></html>
